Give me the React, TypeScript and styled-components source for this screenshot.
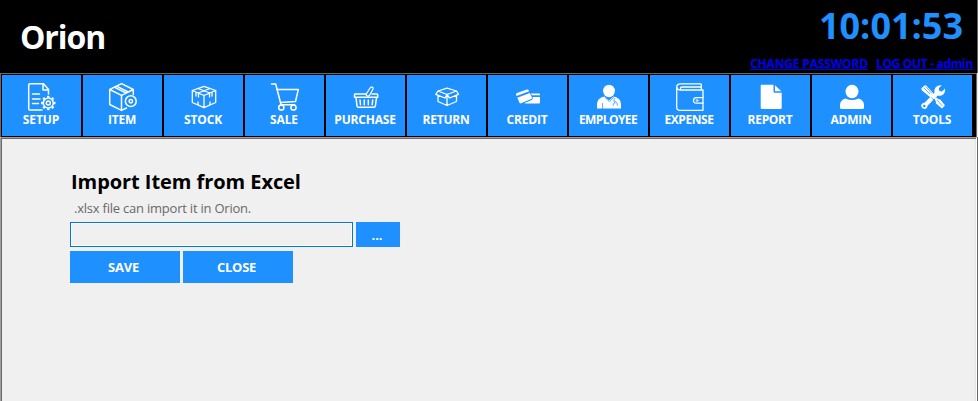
import React from 'react';
import styled, { createGlobalStyle } from 'styled-components';

const Global = createGlobalStyle`
  * { box-sizing: border-box; }
  body { margin: 0; background: #f0f0f0; font-family: 'Open Sans', 'Noto Sans', sans-serif; }
`;

const Window = styled.div`
  width: 978px;
  height: 401px;
  display: flex;
  flex-direction: column;
  overflow: hidden;
  background: #f0f0f0;
`;

const Header = styled.header`
  height: 73px;
  flex: none;
  display: flex;
  justify-content: space-between;
  background: #000;
  border-right: 1px solid #646464;
`;

const Brand = styled.h1`
  margin: 0;
  padding: 15px 0 0 20px;
  font-size: 32px;
  line-height: 44px;
  font-weight: 700;
  letter-spacing: -1.1px;
  color: #fff;
`;

const Session = styled.div`
  display: flex;
  flex-direction: column;
  align-items: flex-end;
`;

const Clock = styled.time`
  padding-right: 14px;
  margin-top: 1px;
  height: 54px;
  font-size: 36px;
  line-height: 50px;
  font-weight: 700;
  color: #1e90ff;
`;

const Links = styled.nav`
  display: flex;
  gap: 8px;
  padding-right: 4px;
`;

const SessionLink = styled.a<{ $spacing: number }>`
  font-size: 12px;
  line-height: 17px;
  font-weight: 700;
  letter-spacing: ${(p) => p.$spacing}px;
  white-space: nowrap;
  color: #0000f0;
  text-decoration: underline;
  text-underline-offset: 1px;
`;

const Toolbar = styled.nav`
  height: 64px;
  flex: none;
  width: 977px;
  display: flex;
  gap: 2px;
  padding: 1px 0 0 1px;
  background: #000;
  border: 1px solid #696969;
  border-bottom: 0;
`;

const Tool = styled.button`
  width: 79px;
  height: 61px;
  flex: none;
  display: flex;
  flex-direction: column;
  align-items: center;
  padding: 8px 0 0;
  border: 0;
  background: #1e90ff;
  color: #fff;
  font-family: inherit;
`;

const Glyph = styled.svg`
  display: block;
  flex: none;
  width: 28px;
  height: 28px;
  margin-left: 1px;
  overflow: visible;
  fill: none;
  stroke: #fff;
  stroke-width: 1.5;
  stroke-linejoin: round;
  stroke-linecap: round;
`;

const ToolLabel = styled.span<{ $spacing: number }>`
  font-size: 12px;
  line-height: 17px;
  font-weight: 700;
  letter-spacing: ${(p) => p.$spacing}px;
  white-space: nowrap;
  margin-right: 1px;
`;

const Workspace = styled.main`
  flex: 1;
  width: 977px;
  padding: 28px 0 0 69px;
  border: 1px solid #a0a0a0;
  border-right-color: #fff;
  border-bottom: 0;
  box-shadow: inset 1px 1px 0 #696969, inset -1px 0 0 #e3e3e3, 1px 0 0 #696969;
`;

const Title = styled.h2`
  margin: 0;
  padding: 2px 0 0 1px;
  font-size: 20px;
  line-height: 28px;
  font-weight: 700;
  letter-spacing: -0.06px;
  color: #000;
`;

const Hint = styled.p`
  margin: 0;
  padding: 3px 0 0 4px;
  height: 26px;
  font-size: 13px;
  line-height: 18px;
  letter-spacing: -0.22px;
  color: #696969;
`;

const Row = styled.div`
  display: flex;
  gap: 3px;
  margin-bottom: 4px;
`;

const PathInput = styled.input`
  width: 283px;
  height: 25px;
  padding: 0 4px;
  border: 1px solid #0078d7;
  border-radius: 0;
  outline: 0;
  background: #f0f0f0;
  box-shadow: inset 0 0 0 1px #fff;
  font: 13px 'Open Sans', sans-serif;
`;

const Action = styled.button<{ $browse?: boolean }>`
  width: ${(p) => (p.$browse ? 44 : 110)}px;
  height: ${(p) => (p.$browse ? 25 : 32)}px;
  padding: 0 ${(p) => (p.$browse ? 2 : 3)}px 0 0;
  border: 0;
  background: #1e90ff;
  color: #fff;
  font-family: inherit;
  font-size: 13px;
  letter-spacing: ${(p) => (p.$browse ? 0 : -0.25)}px;
  line-height: 16px;
  font-weight: 700;
`;

const gearTeeth = Array.from({ length: 8 }, (_, i) => i * 45);

const icons: Record<string, React.ReactNode> = {
  SETUP: (
    <>
      <path d="M14 27H2Q.7 27 .7 25.700V2Q.7.700 2 .700H15.500L20.500 6.500V11M15 1V7H20.500" />
      <path d="M4.500 11H11.500M4.500 16H12M4.500 20.500H10.500" />
      <circle cx="20.300" cy="20" r="5" />
      <circle cx="20.300" cy="20" r="2" />
      {gearTeeth.map((a) => (
        <path key={a} d="M20.300 14.600V12.800" strokeWidth="2.400" strokeLinecap="butt" transform={`rotate(${a} 20.300 20)`} />
      ))}
    </>
  ),
  ITEM: (
    <>
      <path d="M17.500 25L12.500 27.400.700 21.500V6.500L12.500.700 24.300 6.500V11.500M.700 6.500L12.500 12.400 24.300 6.500M12.500 12.400V27.400M5.300 4.200L17.200 10.200M7.500 3.100L19.200 9" />
      <circle cx="21.800" cy="18.200" r="5.400" />
      <circle cx="21.800" cy="18.200" r="1.700" />
    </>
  ),
  STOCK: (
    <g strokeWidth="1.300">
      <path d="M2.300 7.500L14 3.300 25.700 7.500V19.500L14 24.700 2.300 19.500ZM2.300 7.500L14 12.500 25.700 7.500M14 12.500V24.700M8 5.500L20 10M20 5.500L8 10M6 9.500V13M8.500 10.500V14M19.500 10.500V14M22 9.500V13M8 19V22M20 19V22" />
    </g>
  ),
  SALE: (
    <>
      <path d="M.5 1H4.700L10 21.500M5.700 6.500H27.300L24.500 18.500 9.300 19.500M9.800 21.700H23.500" />
      <circle cx="10.300" cy="24.500" r="2.600" />
      <circle cx="22.500" cy="24.500" r="2.600" />
    </>
  ),
  PURCHASE: (
    <>
      <path d="M14 11H3Q2.500 11 2.500 12V14.300H25.700V12Q25.700 11 25 11H20M4 14.500L5 23Q5.200 24.300 6.500 24.300H22Q23.200 24.300 23.400 23L24.500 14.500" />
      <path d="M8 17L8.500 21.700M12.300 17V21.700M16.300 17V21.700M20.700 17L20.200 21.700" />
      <path d="M14 11.500L18 5Q18.500 4 20 4.200T21 6L17.500 12.500Q15 14 14 11.500Z" strokeWidth="1.200" />
    </>
  ),
  RETURN: (
    <g strokeWidth="1.300">
      <path d="M5 8L14 5.200 23.500 8 14 11.500ZM5 8L2.700 11.300 12 15 14 11.500 16.500 15 25.500 11.300 23.500 8M5 12.500V18.500L14 22.500 23.500 18.500V12.500M14 11.500V22.500" />
    </g>
  ),
  CREDIT: (
    <g fill="#fff" stroke="none">
      <path d="M2 11.500Q1.800 10.500 3 10L13 6.500Q14.300 6.200 14.700 7.200L15.100 8.200 2.600 13ZM3.300 14.800L15.900 10 18 14.700Q18.200 15.600 17.300 16L7 20.300Q6 20.700 5.500 19.700Z" />
      <path d="M17 10.500H25Q26 10.500 26 11.500V12.300H17.800ZM18.600 14H26V19.500Q26 20.500 25 20.500H12Q11 20.500 10.500 20L17.800 17Q19.300 16 18.600 14Z" />
    </g>
  ),
  EMPLOYEE: (
    <g fill="#fff" stroke="none">
      <ellipse cx="14" cy="8" rx="5.900" ry="6.200" />
      <path d="M9.500 13.500L14 17.500 18.500 13.500Q26 15 26 21V25.500H2V21Q2 15 9.500 13.500Z" />
      <path d="M10 14.500L14.500 18.700 18.500 14.500M19.500 15.500Q18 19 20 20M20 18Q23 19 22.500 22.500M18 22.500Q18 20 20 19.500M7.500 20.500V25.500" fill="none" stroke="#1e90ff" strokeWidth=".7" />
    </g>
  ),
  EXPENSE: (
    <>
      <path d="M25.300 7V2Q25.300.800 24 .800H4.500Q.700.900.700 4V24Q.700 27.300 4 27.300H27V7H4.500Q1 7 .900 4M4.500 7V5Q4.500 4 6 4H25" strokeWidth="1.300" />
      <path d="M27 14.700H20.500Q17.500 14.700 17.500 17.500T20.500 20.200H27" strokeWidth="1.200" />
      <circle cx="21" cy="17.500" r="1" strokeWidth=".8" />
    </>
  ),
  REPORT: (
    <g fill="#fff" stroke="none">
      <path d="M4.500 1.700H16.500V8.500Q16.500 9.700 17.700 9.700H24.700V25Q24.700 26 23.700 26H5Q3.700 26 3.700 24.800V2.700Q3.700 1.700 4.500 1.700Z" />
      <path d="M18 2.200L24.300 8.300H18Z" />
    </g>
  ),
  ADMIN: (
    <g fill="#fff" stroke="none">
      <ellipse cx="14" cy="8.500" rx="6.500" ry="6.800" />
      <path d="M7.500 15.500Q14 18.500 20.500 15.500 26 17 26 22V24.500Q26 26 24.500 26H3.500Q2 26 2 24.500V22Q2 17 7.500 15.500Z" />
    </g>
  ),
  TOOLS: (
    <g fill="#fff" stroke="none">
      <path d="M2.600 5L5.500 2.400Q6.500 1.800 7.500 2.800L13.700 9.500Q15.500 11.300 14.700 12.800L13.300 14.300Q12 15 10 13.200L3 7.400Q1.800 6 2.600 5Z" />
      <path d="M15.500 15.700L17 14.200 19.500 16.200 21 16.300 26 22.300 23 25.500 17 20.500 16.700 18.500Z" />
      <path d="M22.800 2.300L19.800 5.300 20.300 8 23 8.500 26 5.500Q26.500 10.500 23 12.300 20.500 13.300 18.500 12.500L8.500 22.500Q8.700 25.500 5.300 26.100 2.600 25.700 2.100 23 2.300 20 5.700 19.800L15.500 10Q14.700 7 16.500 4.500 18.700 1.700 22.800 2.300Z" />
      <path d="M5 5L11 11M7 4L13 10.300" stroke="#1e90ff" strokeWidth=".7" />
      <path d="M10.500 15.200L12.200 13.700 16.200 17.200 15.200 18.700Z" fill="#1e90ff" />
      <path d="M15.500 10L5.700 19.800 8.500 22.500 18.500 12.500Z" />
      <circle cx="5.300" cy="23" r="1.200" fill="#1e90ff" />
      <path d="M18.500 17.500L23 22.500M12.500 14.700L16.300 18.200" stroke="#1e90ff" strokeWidth=".7" />
    </g>
  ),
};

const tools: { name: string; spacing: number }[] = [
  { name: 'SETUP', spacing: -0.1 },
  { name: 'ITEM', spacing: -0.2 },
  { name: 'STOCK', spacing: -0.15 },
  { name: 'SALE', spacing: -0.1 },
  { name: 'PURCHASE', spacing: -0.2 },
  { name: 'RETURN', spacing: -0.2 },
  { name: 'CREDIT', spacing: -0.2 },
  { name: 'EMPLOYEE', spacing: -0.6 },
  { name: 'EXPENSE', spacing: -0.42 },
  { name: 'REPORT', spacing: -0.3 },
  { name: 'ADMIN', spacing: -0.2 },
  { name: 'TOOLS', spacing: -0.2 },
];

export default function App() {
  return (
    <Window>
      <Global />
      <Header>
        <Brand>Orion</Brand>
        <Session>
          <Clock>10:01:53</Clock>
          <Links>
            <SessionLink $spacing={-0.17}>CHANGE PASSWORD</SessionLink>
            <SessionLink $spacing={-0.33}>LOG OUT - admin</SessionLink>
          </Links>
        </Session>
      </Header>
      <Toolbar>
        {tools.map((t) => (
          <Tool key={t.name}>
            <Glyph viewBox="0 0 28 28">{icons[t.name]}</Glyph>
            <ToolLabel $spacing={t.spacing}>{t.name}</ToolLabel>
          </Tool>
        ))}
      </Toolbar>
      <Workspace>
        <Title>Import Item from Excel</Title>
        <Hint>.xlsx file can import it in Orion.</Hint>
        <Row>
          <PathInput aria-label="File path" />
          <Action $browse>...</Action>
        </Row>
        <Row>
          <Action>SAVE</Action>
          <Action>CLOSE</Action>
        </Row>
      </Workspace>
    </Window>
  );
}
